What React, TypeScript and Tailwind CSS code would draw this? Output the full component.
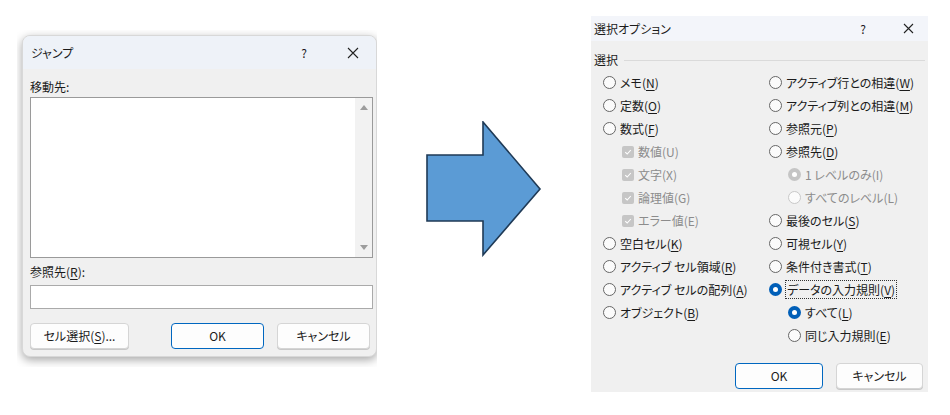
import React from "react";

const font = "font-['Noto_Sans_CJK_JP','Noto_Sans',sans-serif] [font-feature-settings:'palt']";

const U = ({ children }: { children: React.ReactNode }) => (
  <span className="underline underline-offset-2">{children}</span>
);

type RadioState = "off" | "on" | "disabled" | "disabledOn";

const Radio = ({ state }: { state: RadioState }) => {
  if (state === "on")
    return (
      <span className="w-[13px] h-[13px] rounded-full bg-[#005fb8] flex items-center justify-center shrink-0">
        <span className="w-[5px] h-[5px] rounded-full bg-white" />
      </span>
    );
  if (state === "disabledOn")
    return (
      <span className="w-[13px] h-[13px] rounded-full bg-[#c5c5c5] flex items-center justify-center shrink-0">
        <span className="w-[5px] h-[5px] rounded-full bg-white" />
      </span>
    );
  return (
    <span
      className={`w-[13px] h-[13px] rounded-full bg-[#fbfbfb] border shrink-0 ${
        state === "disabled" ? "border-[#c8c8c8]" : "border-[#666666]"
      }`}
    />
  );
};

const Check = () => (
  <span className="w-[12px] h-[12px] rounded-[2px] bg-[#c6c6c6] flex items-center justify-center shrink-0">
    <svg width="8" height="8" viewBox="0 0 8 8">
      <path d="M1.2 4.2 L3.2 6 L6.8 2" fill="none" stroke="white" strokeWidth="1.1" />
    </svg>
  </span>
);

const Row = ({
  indent = 0,
  control,
  children,
  disabled,
  focus,
}: {
  indent?: number;
  control: React.ReactNode;
  children: React.ReactNode;
  disabled?: boolean;
  focus?: boolean;
}) => (
  <div className="h-[23px] flex items-center gap-[4px]" style={{ paddingLeft: indent }}>
    {control}
    <span
      className={`leading-[17px] whitespace-nowrap ${disabled ? "text-[#8c8c8c]" : "text-[#1b1b1b]"} ${
        focus ? "outline outline-1 outline-dotted outline-[#333] px-[1px]" : ""
      }`}
    >
      {children}
    </span>
  </div>
);

const Button = ({ children, primary, w }: { children: React.ReactNode; primary?: boolean; w: string }) => (
  <div
    className={`${w} h-[26px] rounded-[4px] bg-[#fdfdfd] flex items-center justify-center text-[12px] text-[#1b1b1b] border ${
      primary ? "border-[#0067c0]" : "border-[#d5d5d5] shadow-[0_1px_0_#c8c8c8]"
    }`}
  >
    {children}
  </div>
);

const GoToDialog = () => (
  <div className="w-[360px] h-[337px] overflow-hidden pl-[5px] pt-[5px] shrink-0">
    <div className="w-[355px] h-[322px] rounded-[8px] bg-[#f0f0f0] border border-[#d8d8d8] shadow-[0_3px_10px_rgba(0,0,0,0.35)] flex flex-col overflow-hidden">
      <div className="h-[33px] bg-[#eef2f8] flex items-center pl-[8px] text-[12px] text-[#1b1b1b]">
        <span>ジャンプ</span>
        <span className="ml-auto w-[14px] text-center">?</span>
        <svg className="ml-[36px] mr-[17px]" width="12" height="12" viewBox="0 0 12 12">
          <path d="M1 1 L11 11 M11 1 L1 11" stroke="#222" strokeWidth="1.1" />
        </svg>
      </div>
      <div className="flex flex-col pl-[7px] w-[350px] pt-[9px] text-[12px] text-[#1b1b1b]">
        <div className="h-[18px] leading-[18px]">移動先:</div>
        <div className="mt-[1px] h-[161px] bg-white border border-[#9a9a9a] flex justify-end">
          <div className="w-[17px] bg-[#f2f2f2] flex flex-col items-center justify-between py-[7px]">
            <svg width="8" height="5" viewBox="0 0 8 5">
              <path d="M0 5 L4 0 L8 5 Z" fill="#9d9d9d" />
            </svg>
            <svg width="8" height="5" viewBox="0 0 8 5">
              <path d="M0 0 L4 5 L8 0 Z" fill="#9d9d9d" />
            </svg>
          </div>
        </div>
        <div className="mt-[5px] h-[18px] leading-[18px]">
          参照先(<U>R</U>):
        </div>
        <div className="mt-[4px] h-[24px] bg-white border border-[#aaaaaa]" />
        <div className="mt-[14px] flex items-center">
          <Button w="w-[99px]">
            セル選択(<U>S</U>)...
          </Button>
          <div className="ml-[42px]">
            <Button w="w-[93px]" primary>
              OK
            </Button>
          </div>
          <div className="ml-[13px]">
            <Button w="w-[93px]">キャンセル</Button>
          </div>
        </div>
      </div>
    </div>
  </div>
);

const Arrow = () => (
  <svg width="116" height="136" viewBox="0 0 116 136" className="shrink-0">
    <polygon
      points="1,34 57,34 57,1 114,68 57,134 57,100 1,100"
      fill="#5b9bd5"
      stroke="#1f3a56"
      strokeWidth="1.6"
      strokeLinejoin="miter"
    />
  </svg>
);

const SelectDialog = () => (
  <div className="w-[337px] h-[376px] bg-[#f0f0f0] flex flex-col shrink-0 text-[12px]">
    <div className="h-[25px] bg-[#f3f5fa] flex items-center pl-[3px] text-[#1b1b1b]">
      <span>選択オプション</span>
      <span className="ml-auto w-[12px] text-center">?</span>
      <svg className="ml-[34px] mr-[14px]" width="11" height="11" viewBox="0 0 11 11">
        <path d="M1 1 L10 10 M10 1 L1 10" stroke="#222" strokeWidth="1.1" />
      </svg>
    </div>
    <div className="flex items-center h-[20px] mt-[9px] pl-[3px] pr-[3px]">
      <span className="text-[#1b1b1b]">選択</span>
      <div className="flex-1 h-px bg-[#dadada] ml-[6px]" />
    </div>
    <div className="flex mt-[1px] pl-[12px]">
      <div className="w-[166px] flex flex-col">
        <Row control={<Radio state="off" />}>
          メモ(<U>N</U>)
        </Row>
        <Row control={<Radio state="off" />}>
          定数(<U>O</U>)
        </Row>
        <Row control={<Radio state="off" />}>
          数式(<U>F</U>)
        </Row>
        <Row indent={19} control={<Check />} disabled>
          数値(U)
        </Row>
        <Row indent={19} control={<Check />} disabled>
          文字(X)
        </Row>
        <Row indent={19} control={<Check />} disabled>
          論理値(G)
        </Row>
        <Row indent={19} control={<Check />} disabled>
          エラー値(E)
        </Row>
        <Row control={<Radio state="off" />}>
          空白セル(<U>K</U>)
        </Row>
        <Row control={<Radio state="off" />}>
          アクティブ セル領域(<U>R</U>)
        </Row>
        <Row control={<Radio state="off" />}>
          アクティブ セルの配列(<U>A</U>)
        </Row>
        <Row control={<Radio state="off" />}>
          オブジェクト(<U>B</U>)
        </Row>
      </div>
      <div className="flex flex-col">
        <Row control={<Radio state="off" />}>
          アクティブ行との相違(<U>W</U>)
        </Row>
        <Row control={<Radio state="off" />}>
          アクティブ列との相違(<U>M</U>)
        </Row>
        <Row control={<Radio state="off" />}>
          参照元(<U>P</U>)
        </Row>
        <Row control={<Radio state="off" />}>
          参照先(<U>D</U>)
        </Row>
        <Row indent={19} control={<Radio state="disabledOn" />} disabled>
          1 レベルのみ(I)
        </Row>
        <Row indent={19} control={<Radio state="disabled" />} disabled>
          すべてのレベル(L)
        </Row>
        <Row control={<Radio state="off" />}>
          最後のセル(<U>S</U>)
        </Row>
        <Row control={<Radio state="off" />}>
          可視セル(<U>Y</U>)
        </Row>
        <Row control={<Radio state="off" />}>
          条件付き書式(<U>T</U>)
        </Row>
        <Row control={<Radio state="on" />} focus>
          データの入力規則(<U>V</U>)
        </Row>
        <Row indent={19} control={<Radio state="on" />}>
          すべて(<U>L</U>)
        </Row>
        <Row indent={19} control={<Radio state="off" />}>
          同じ入力規則(<U>E</U>)
        </Row>
      </div>
    </div>
    <div className="flex justify-end gap-[13px] pr-[5px] mt-[16px]">
      <Button w="w-[88px]" primary>
        OK
      </Button>
      <Button w="w-[87px]">キャンセル</Button>
    </div>
  </div>
);

export default function App() {
  return (
    <div className={`w-[950px] h-[415px] bg-white flex items-start ${font}`}>
      <div className="ml-[17px] mt-[30px]">
        <GoToDialog />
      </div>
      <div className="ml-[49px] mt-[121px]">
        <Arrow />
      </div>
      <div className="ml-[49px] mt-[16px]">
        <SelectDialog />
      </div>
    </div>
  );
}
